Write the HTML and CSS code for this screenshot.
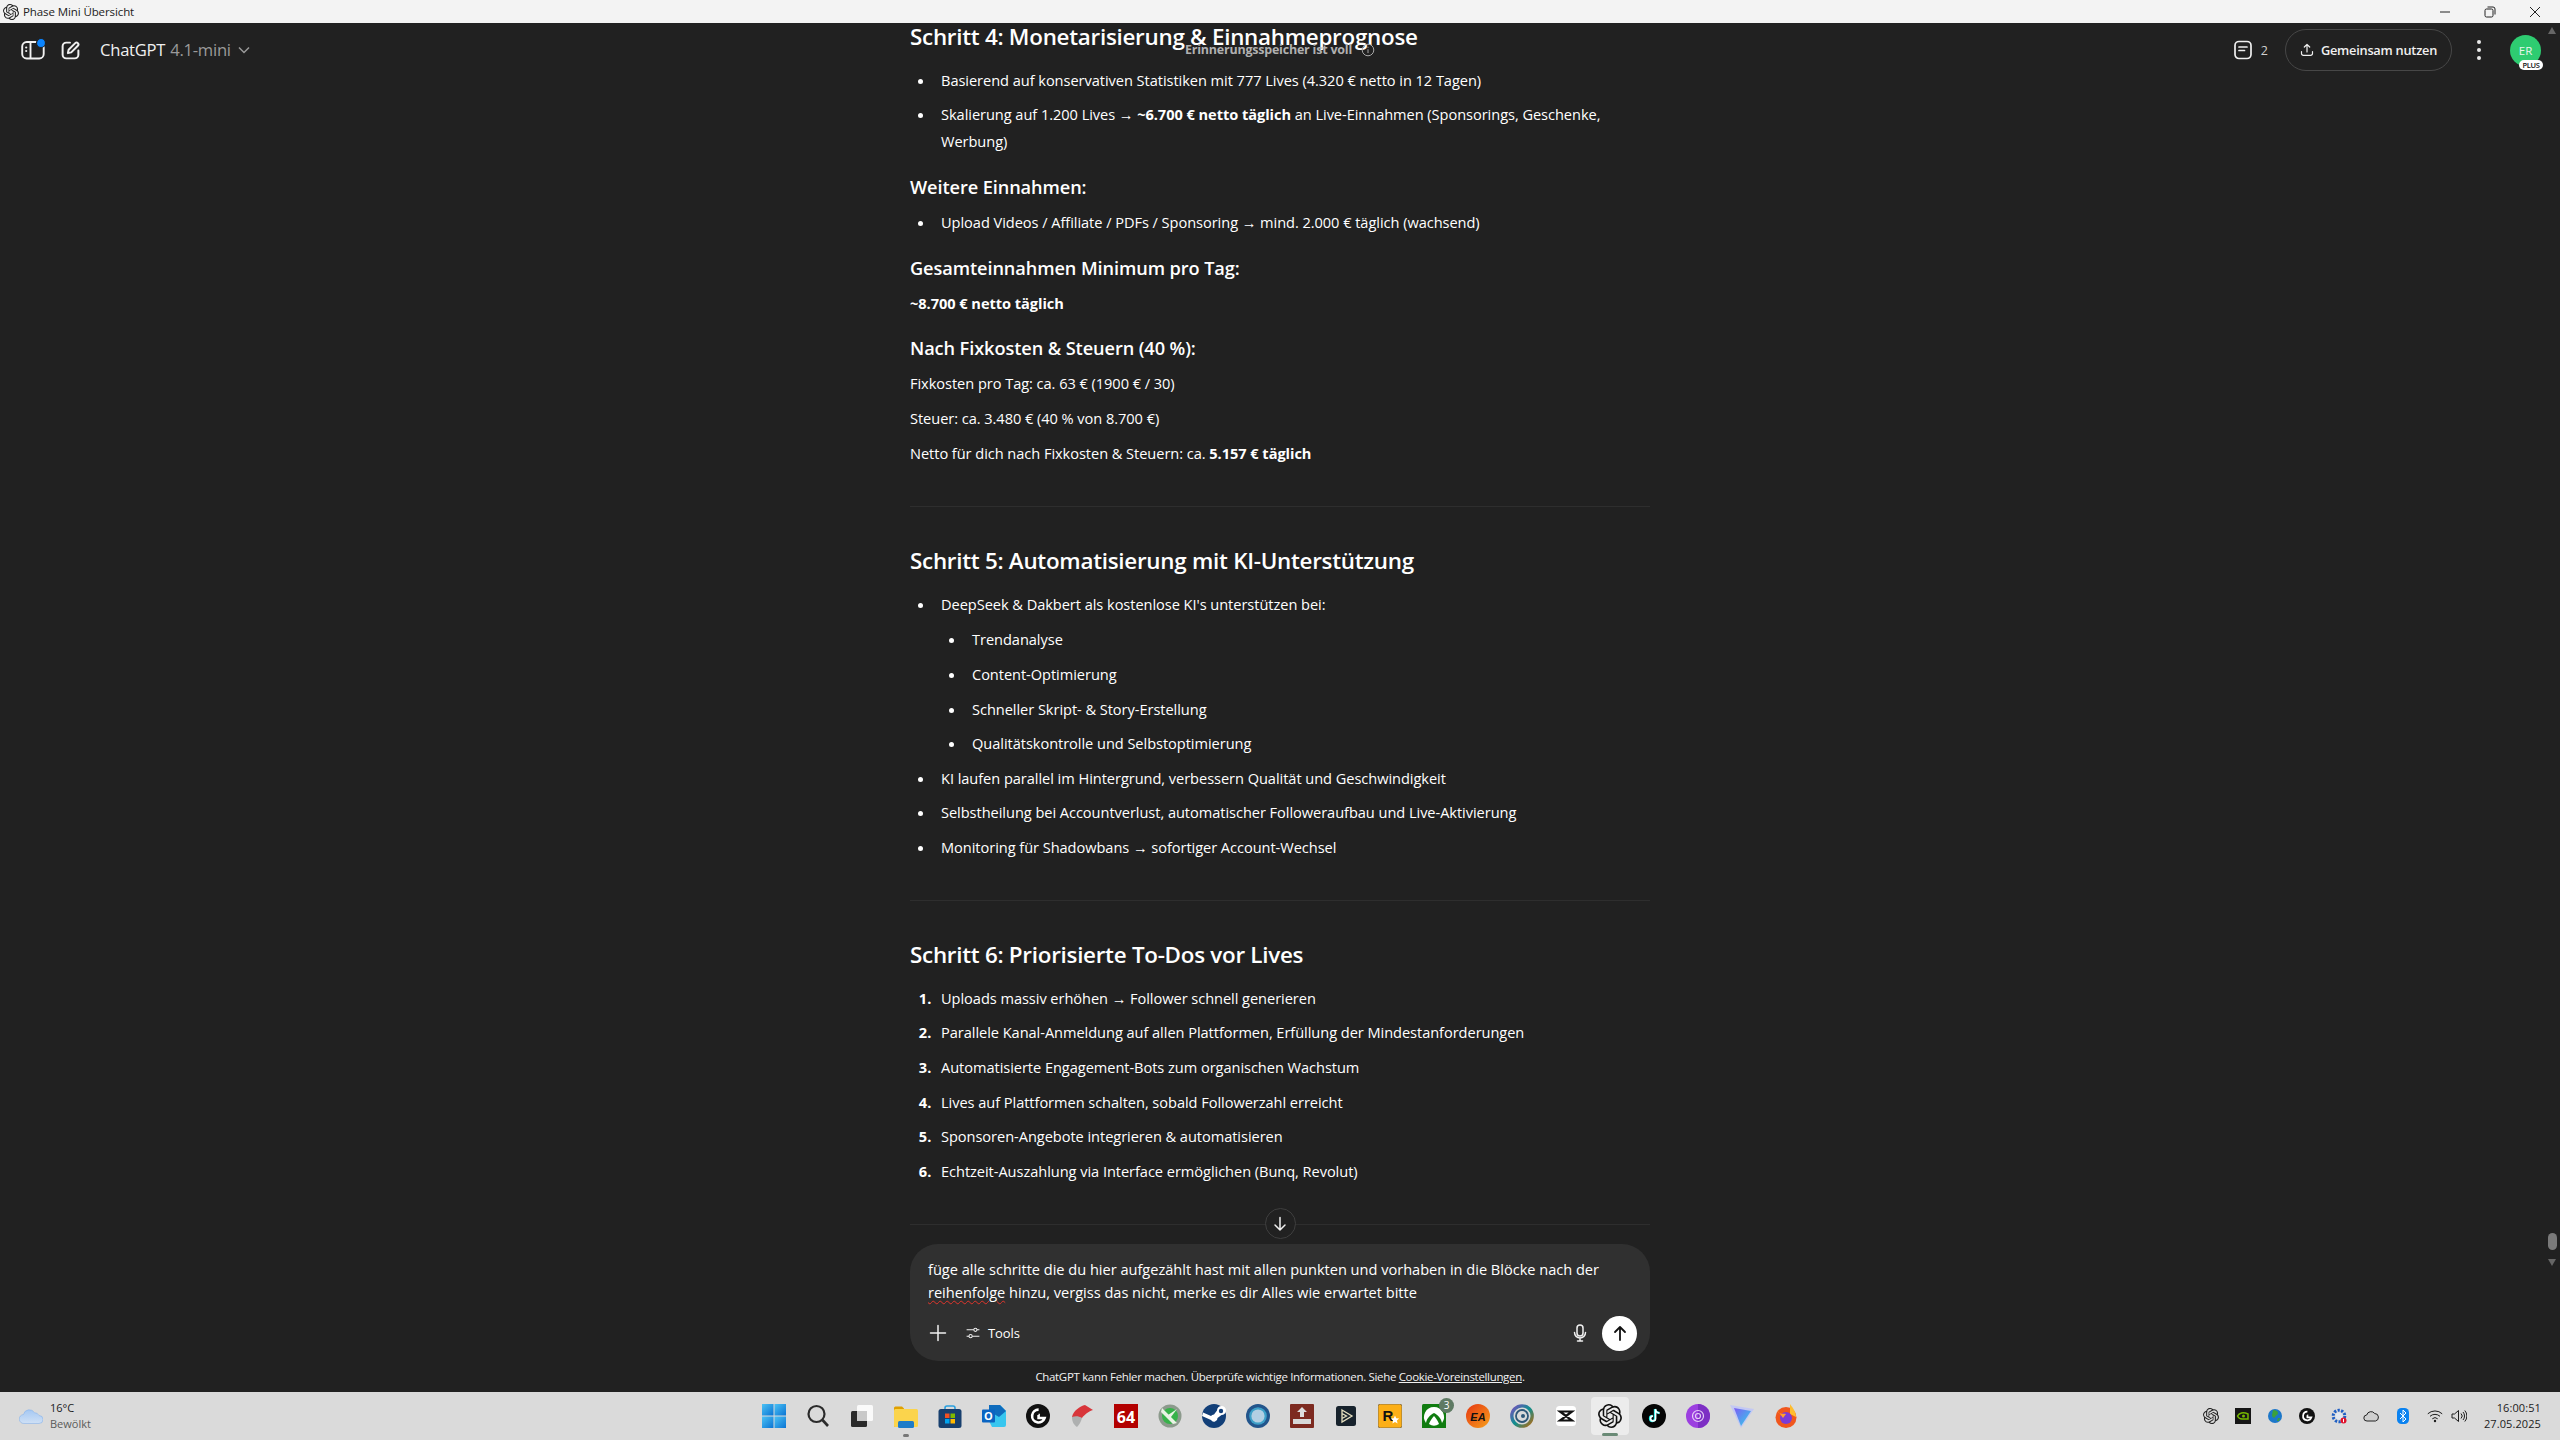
FILE: index.html
```html
<!DOCTYPE html>
<html lang="de">
<head>
<meta charset="utf-8">
<title>Phase Mini Übersicht</title>
<link rel="stylesheet" href="styles.css">
</head>
<body>
<svg class="defs" width="0" height="0" aria-hidden="true">
  <defs>
    <symbol id="openai" viewBox="0 0 24 24"><path d="M22.2819 9.8211a5.9847 5.9847 0 0 0-.5157-4.9108 6.0462 6.0462 0 0 0-6.5098-2.9A6.0651 6.0651 0 0 0 4.9807 4.1818a5.9847 5.9847 0 0 0-3.9977 2.9 6.0462 6.0462 0 0 0 .7427 7.0966 5.98 5.98 0 0 0 .511 4.9107 6.051 6.051 0 0 0 6.5146 2.9001A5.9847 5.9847 0 0 0 13.2599 24a6.0557 6.0557 0 0 0 5.7718-4.2058 5.9894 5.9894 0 0 0 3.9977-2.9001 6.0557 6.0557 0 0 0-.7475-7.0729zm-9.022 12.6081a4.4755 4.4755 0 0 1-2.8764-1.0408l.1419-.0804 4.7783-2.7582a.7948.7948 0 0 0 .3927-.6813v-6.7369l2.02 1.1686a.071.071 0 0 1 .038.052v5.5826a4.504 4.504 0 0 1-4.4945 4.4944zm-9.6607-4.1254a4.4708 4.4708 0 0 1-.5346-3.0137l.142.0852 4.783 2.7582a.7712.7712 0 0 0 .7806 0l5.8428-3.3685v2.3324a.0804.0804 0 0 1-.0332.0615L9.74 19.9502a4.4992 4.4992 0 0 1-6.1408-1.6464zM2.3408 7.8956a4.485 4.485 0 0 1 2.3655-1.9728V11.6a.7664.7664 0 0 0 .3879.6765l5.8144 3.3543-2.0201 1.1685a.0757.0757 0 0 1-.071 0l-4.8303-2.7865A4.504 4.504 0 0 1 2.3408 7.872zm16.5963 3.8558L13.1038 8.364 15.1192 7.2a.0757.0757 0 0 1 .071 0l4.8303 2.7913a4.4944 4.4944 0 0 1-.6765 8.1042v-5.6772a.79.79 0 0 0-.407-.667zm2.0107-3.0231l-.142-.0852-4.7735-2.7818a.7759.7759 0 0 0-.7854 0L9.409 9.2297V6.8974a.0662.0662 0 0 1 .0284-.0615l4.8303-2.7866a4.4992 4.4992 0 0 1 6.6802 4.66zM8.3065 12.863l-2.02-1.1638a.0804.0804 0 0 1-.038-.0567V6.0742a4.4992 4.4992 0 0 1 7.3757-3.4537l-.142.0805L8.704 5.459a.7948.7948 0 0 0-.3927.6813zm1.0976-2.3654l2.602-1.4998 2.6069 1.4998v2.9994l-2.5974 1.4997-2.6067-1.4997Z"/></symbol>
    <symbol id="logi" viewBox="0 0 24 24"><circle cx="12" cy="12" r="12" fill="#111"/><path d="M12.6 5.6a6.4 6.4 0 1 0 6 8.4h-6v-3h-.1" fill="none" stroke="#fff" stroke-width="2.6"/></symbol>
    <linearGradient id="winblue" x1="0" y1="0" x2="1" y2="1"><stop offset="0" stop-color="#4cc2f4"/><stop offset="1" stop-color="#0a74d4"/></linearGradient>
  </defs>
</svg>

<div class="window">
  <header class="titlebar">
    <div class="titlebar-left">
      <svg class="title-logo"><use href="#openai"/></svg>
      <span class="title-text">Phase Mini Übersicht</span>
    </div>
    <div class="winctl">
      <svg class="winbtn" viewBox="0 0 12 12"><path d="M1 6h10" /></svg>
      <svg class="winbtn" viewBox="0 0 12 12"><rect x="1" y="3" width="8" height="8" rx="1.5"/><path d="M3.5 1h5.5a2 2 0 0 1 2 2v5.5"/></svg>
      <svg class="winbtn" viewBox="0 0 12 12"><path d="M1 1l10 10M11 1L1 11"/></svg>
    </div>
  </header>

  <main class="app">
    <div class="scroller">
      <article class="doc">
        <h3>Schritt 4: Monetarisierung &amp; Einnahmeprognose</h3>
        <ul>
          <li>Basierend auf konservativen Statistiken mit 777 Lives (4.320 € netto in 12 Tagen)</li>
          <li>Skalierung auf 1.200 Lives → <strong>~6.700 € netto täglich</strong> an Live-Einnahmen (Sponsorings, Geschenke, Werbung)</li>
        </ul>
        <h4>Weitere Einnahmen:</h4>
        <ul>
          <li>Upload Videos / Affiliate / PDFs / Sponsoring → mind. 2.000 € täglich (wachsend)</li>
        </ul>
        <h4>Gesamteinnahmen Minimum pro Tag:</h4>
        <p><strong>~8.700 € netto täglich</strong></p>
        <h4>Nach Fixkosten &amp; Steuern (40 %):</h4>
        <p>Fixkosten pro Tag: ca. 63 € (1900 € / 30)</p>
        <p>Steuer: ca. 3.480 € (40 % von 8.700 €)</p>
        <p>Netto für dich nach Fixkosten &amp; Steuern: ca. <strong>5.157 € täglich</strong></p>
        <hr>
        <h3>Schritt 5: Automatisierung mit KI-Unterstützung</h3>
        <ul>
          <li>DeepSeek &amp; Dakbert als kostenlose KI's unterstützen bei:
            <ul>
              <li>Trendanalyse</li>
              <li>Content-Optimierung</li>
              <li>Schneller Skript- &amp; Story-Erstellung</li>
              <li>Qualitätskontrolle und Selbstoptimierung</li>
            </ul>
          </li>
          <li>KI laufen parallel im Hintergrund, verbessern Qualität und Geschwindigkeit</li>
          <li>Selbstheilung bei Accountverlust, automatischer Followeraufbau und Live-Aktivierung</li>
          <li>Monitoring für Shadowbans → sofortiger Account-Wechsel</li>
        </ul>
        <hr>
        <h3>Schritt 6: Priorisierte To-Dos vor Lives</h3>
        <ol>
          <li>Uploads massiv erhöhen → Follower schnell generieren</li>
          <li>Parallele Kanal-Anmeldung auf allen Plattformen, Erfüllung der Mindestanforderungen</li>
          <li>Automatisierte Engagement-Bots zum organischen Wachstum</li>
          <li>Lives auf Plattformen schalten, sobald Followerzahl erreicht</li>
          <li>Sponsoren-Angebote integrieren &amp; automatisieren</li>
          <li>Echtzeit-Auszahlung via Interface ermöglichen (Bunq, Revolut)</li>
        </ol>
        <hr>
      </article>
      <button class="scroll-down" aria-label="Nach unten">
        <svg viewBox="0 0 20 20" class="ico20"><path d="M10 3.5v12.5M5 11l5 5 5-5"/></svg>
      </button>
    </div>

    <div class="composer">
      <div class="composer-text">füge alle schritte die du hier aufgezählt hast mit allen punkten und vorhaben in die Blöcke nach der <span class="typo">reihenfolge</span> hinzu, vergiss das nicht, merke es dir Alles wie erwartet bitte</div>
      <div class="composer-row">
        <div class="composer-tools">
          <svg viewBox="0 0 20 20" class="ico20"><path d="M10 2.5v15M2.5 10h15"/></svg>
          <svg viewBox="0 0 20 20" class="ico16"><path d="M2 6h9M15 6h3M2 14h3M9 14h9"/><circle cx="13" cy="6" r="2"/><circle cx="7" cy="14" r="2"/></svg>
          <span class="tools-label">Tools</span>
        </div>
        <div class="composer-send">
          <svg viewBox="0 0 20 20" class="ico20"><rect x="7" y="2" width="6" height="11" rx="3"/><path d="M4.5 9.5a5.5 5.5 0 0 0 11 0M10 15v3M7.5 18h5"/></svg>
          <button class="send" aria-label="Senden"><svg viewBox="0 0 20 20" class="ico20 ico-dark"><path d="M10 17V4M5 9l5-5 5 5"/></svg></button>
        </div>
      </div>
    </div>
    <footer class="disclaimer">ChatGPT kann Fehler machen. Überprüfe wichtige Informationen. Siehe <u>Cookie-Voreinstellungen</u>.</footer>

    <div class="topbar">
      <div class="top-left">
        <svg viewBox="0 0 24 20" class="side-ico"><rect x="1.2" y="2" width="21.5" height="16.5" rx="4.5"/><path d="M9.5 2v16.5"/><circle class="fillw" cx="5.2" cy="7.5" r="1.1"/><circle class="fillw" cx="5.2" cy="11" r="1.1"/><circle class="blue-dot" cx="20" cy="3" r="4.5"/></svg>
        <svg viewBox="0 0 20 20" class="edit-ico"><path d="M9.5 2.5H6a3.5 3.5 0 0 0-3.500 3.500v8A3.500 3.500 0 0 0 6 17.500h8a3.500 3.500 0 0 0 3.500-3.500v-4"/><path d="M7.500 12.500l.7-3.200 6.300-6.300a1.700 1.700 0 0 1 2.500 2.500l-6.300 6.300z"/></svg>
        <div class="model">ChatGPT <span class="model-ver">4.1-mini</span>
          <svg viewBox="0 0 14 14" class="chev"><path d="M2 4.500l5 5 5-5"/></svg>
        </div>
      </div>
      <div class="memory">Erinnerungsspeicher ist voll
        <svg viewBox="0 0 14 14" class="info"><circle cx="7" cy="7" r="5.800"/><path d="M7 6.300v3.800M7 3.800v1"/></svg>
      </div>
      <div class="top-right">
        <div class="docs">
          <svg viewBox="0 0 20 20" class="doc-ico"><rect x="2" y="1.500" width="16" height="17" rx="4"/><path d="M6 7h8M6 10.500h5.500"/></svg>
          <span>2</span>
        </div>
        <button class="share">
          <svg viewBox="0 0 14 14" class="share-ico"><path d="M7 9V1.500M4.300 4L7 1.500 9.700 4M1.500 8.500v2A1.800 1.800 0 0 0 3.300 12.300h7.400a1.800 1.800 0 0 0 1.800-1.800v-2"/></svg>
          Gemeinsam nutzen
        </button>
        <div class="dots"><i></i><i></i><i></i></div>
        <div class="avatar">ER<span class="plus">PLUS</span></div>
      </div>
    </div>

    <div class="scrollbar">
      <span class="arrow-up"></span>
      <span class="sb-spacer"></span>
      <span class="thumb"></span>
      <span class="arrow-down"></span>
    </div>
  </main>

  <footer class="taskbar">
    <div class="weather">
      <svg viewBox="0 0 24 16" class="weather-ico"><defs><linearGradient id="cloud" x1="0" y1="0" x2="0" y2="1"><stop offset="0" stop-color="#a5c8f3"/><stop offset="1" stop-color="#cfe0f5"/></linearGradient></defs><path fill="url(#cloud)" stroke="#8ab4ea" stroke-width=".6" d="M5 15.500a4.500 4.500 0 0 1-.5-9 6 6 0 0 1 11-1.800 5 5 0 0 1 4.500 2.800 4 4 0 0 1 0 8z"/></svg>
      <div class="weather-text"><span class="temp">16°C</span><span class="cond">Bewölkt</span></div>
    </div>

    <nav class="apps">
      <div class="app-slot"><svg viewBox="0 0 24 24"><g fill="url(#winblue)"><rect width="11.500" height="11.500"/><rect x="12.500" width="11.500" height="11.500"/><rect y="12.500" width="11.500" height="11.500"/><rect x="12.500" y="12.500" width="11.500" height="11.500"/></g></svg></div>
      <div class="app-slot"><svg viewBox="0 0 24 24"><circle cx="10.500" cy="10" r="8" fill="none" stroke="#2b2b2b" stroke-width="2.200"/><path d="M16.500 16l5.500 6" stroke="#2b2b2b" stroke-width="2.600"/></svg></div>
      <div class="app-slot"><svg viewBox="0 0 24 24"><rect x="7" y="1" width="16" height="16" rx="1.500" fill="#fafafa"/><rect x="1" y="7" width="16" height="16" rx="1.500" fill="#2a2a2a"/><rect x="7" y="7" width="10" height="10" fill="#c9c9c9"/></svg></div>
      <div class="app-slot running"><svg viewBox="0 0 24 24"><path d="M0 4a1.500 1.500 0 0 1 1.500-1.500H8l2 2v18H0z" fill="#e0a000"/><rect y="5" width="24" height="18" rx="1.500" fill="#fbd44c"/><rect x="4" y="17" width="16" height="7" rx="1.500" fill="#1e7cc8"/></svg></div>
      <div class="app-slot"><svg viewBox="0 0 24 24"><path d="M7 7V4a2 2 0 0 1 2-2h6a2 2 0 0 1 2 2v3" fill="none" stroke="#2aa0e0" stroke-width="1.600"/><rect x="0.500" y="5" width="23" height="19" rx="2.500" fill="#173f6e"/><rect x="7" y="9.500" width="4.500" height="4.500" fill="#f25022"/><rect x="12.500" y="9.500" width="4.500" height="4.500" fill="#7fba00"/><rect x="7" y="15" width="4.500" height="4.500" fill="#00a4ef"/><rect x="12.500" y="15" width="4.500" height="4.500" fill="#ffb900"/></svg></div>
      <div class="app-slot"><svg viewBox="0 0 24 24"><path d="M7 1h11l6 6v14a2 2 0 0 1-2 2H10l-3-6z" fill="#37c6ef"/><path d="M7 1h11l6 6-7 6-10-6z" fill="#0f6cbd"/><rect y="5.500" width="13" height="13" rx="1" fill="#0a64c2"/><text x="6.500" y="16" class="ol">O</text></svg></div>
      <div class="app-slot"><svg><use href="#logi"/></svg></div>
      <div class="app-slot"><svg viewBox="0 0 24 24"><path d="M2 13C3 7 10 2 15 1l8 5c-4 1-9 5-11 8z" fill="#d8353a"/><path d="M2 13c3-1 7-1 10 1-1 4-3 7-5 9-3-2-5-5-5-10z" fill="#aeb0b0"/></svg></div>
      <div class="app-slot"><svg viewBox="0 0 24 24"><rect width="24" height="24" fill="#b30000"/><text x="12" y="19" class="six4">64</text></svg></div>
      <div class="app-slot"><svg viewBox="0 0 24 24"><circle cx="12" cy="12" r="11.500" fill="#8c9a8c"/><circle cx="12" cy="12" r="8" fill="#37b24a"/><path d="M4 4l15 15-4 1L3 8zM19 5l-6 8-3-2z" fill="#e9f3e4"/></svg></div>
      <div class="app-slot"><svg viewBox="0 0 24 24"><circle cx="12" cy="12" r="12" fill="#123f78"/><path d="M0 12l9 4a3.500 3.500 0 0 0 6.500-2l4-3a4.500 4.500 0 1 0-4.500-4.500l-3 4a3.500 3.500 0 0 0-3 1.500L1 8.500" fill="#fff"/><circle cx="19" cy="7" r="2.200" fill="#123f78"/></svg></div>
      <div class="app-slot"><svg viewBox="0 0 24 24"><circle cx="12" cy="12" r="12" fill="#22558c"/><circle cx="12" cy="12" r="8.800" fill="#3ea0c8"/><circle cx="12" cy="12" r="6.600" fill="#b3cfe3"/></svg></div>
      <div class="app-slot"><svg viewBox="0 0 24 24"><rect width="24" height="24" rx="1" fill="#7d2a20"/><path d="M12 3l5 5h-3v5h-4V8H7z" fill="#ddd"/><rect x="3" y="15" width="18" height="5" fill="#d8d8d8"/></svg></div>
      <div class="app-slot"><svg viewBox="0 0 24 24"><rect x="2" y="2" width="20" height="20" rx="2.500" fill="#17222c"/><path d="M8 6l10 6-10 6zM8 9.500l4.500 2.500L8 14.500" fill="none" stroke="#e6e0c0" stroke-width="1.300"/></svg></div>
      <div class="app-slot"><svg viewBox="0 0 24 24"><rect width="24" height="24" rx="2.500" fill="#fcaf17" stroke="#8a7040"/><text x="10" y="17" class="rstar">R</text><path d="M17 11.500l1.200 2.800 3 .2-2.300 2 .7 3-2.600-1.600-2.600 1.600.7-3-2.300-2 3-.2z" fill="#fff"/></svg></div>
      <div class="app-slot"><svg viewBox="0 0 24 24"><rect width="24" height="25" rx="1.500" fill="#107c10"/><path d="M12 3a10 10 0 0 0-8 16c1-5 4-8 8-10 4 2 7 5 8 10a10 10 0 0 0-8-16zM12 12c-2 2-4 5-5 8a9 9 0 0 0 10 0c-1-3-3-6-5-8z" fill="#fff"/></svg><span class="badge">3</span></div>
      <div class="app-slot"><svg viewBox="0 0 24 24"><defs><linearGradient id="ea" x1="0" y1="0" x2="1" y2="1"><stop offset="0" stop-color="#e53612"/><stop offset="1" stop-color="#f7a01c"/></linearGradient></defs><circle cx="12" cy="12" r="12" fill="url(#ea)"/><text x="12" y="16.500" class="ea">EA</text></svg></div>
      <div class="app-slot"><svg viewBox="0 0 24 24"><defs><linearGradient id="ubi" x1="0" y1="0" x2="1" y2="1"><stop offset="0" stop-color="#7a4fc0"/><stop offset=".5" stop-color="#0e8f8f"/><stop offset="1" stop-color="#b86a10"/></linearGradient></defs><circle cx="12" cy="12" r="10.200" fill="none" stroke="url(#ubi)" stroke-width="3.300"/><circle cx="12" cy="12" r="6" fill="none" stroke="#2f5878" stroke-width="1.800"/><circle cx="13" cy="12" r="2" fill="#2f5878"/></svg></div>
      <div class="app-slot"><svg viewBox="0 0 24 24"><rect x="2" y="2" width="20" height="20" rx="3.500" fill="#fff"/><path d="M6 7.500h12l-6 4.500zM6 16.500h12l-6-4.500z" fill="none" stroke="#111" stroke-width="2.200"/></svg></div>
      <div class="app-slot active"><svg class="logo-dark"><use href="#openai"/></svg></div>
      <div class="app-slot"><svg viewBox="0 0 24 24"><circle cx="12" cy="12" r="12" fill="#050505"/><path d="M13 5v9.500a2.500 2.500 0 1 1-2.500-2.500M13 5a4.500 4.500 0 0 0 4.500 4" fill="none" stroke="#25f4ee" stroke-width="2.300"/><path d="M13.600 5v9.500a2.500 2.500 0 1 1-2.500-2.500M13.600 5a4 4 0 0 0 4 4" fill="none" stroke="#fff" stroke-width="1.500"/></svg></div>
      <div class="app-slot"><svg viewBox="0 0 24 24"><circle cx="12" cy="12" r="12" fill="#9c3fe0"/><path d="M12 0a12 12 0 0 1 0 24z" fill="#7d2fc4"/><circle cx="12" cy="12" r="2.500" fill="none" stroke="#e6cff7" stroke-width="1.200"/><circle cx="12" cy="12" r="5.500" fill="none" stroke="#e6cff7" stroke-width="1.200"/></svg></div>
      <div class="app-slot"><svg viewBox="0 0 24 24"><defs><linearGradient id="pv" x1="0" y1="0" x2="1" y2="1"><stop offset="0" stop-color="#7d5cf5"/><stop offset="1" stop-color="#2fd4e8"/></linearGradient></defs><path d="M0 1l24 4-13 19z" fill="#c3c8f3"/><path d="M4 4l17 3-10 15z" fill="url(#pv)"/></svg></div>
      <div class="app-slot"><svg viewBox="0 0 24 24"><circle cx="12" cy="13.500" r="10.500" fill="#f0561d"/><path d="M16 0c2 3 6 7 6 13l-6-3z" fill="#ffbd2e"/><circle cx="12" cy="14" r="6" fill="#7a3bd6"/><path d="M3 6c1 5 6 3 9 4l-3 4z" fill="#ffa12a"/></svg></div>
    </nav>

    <div class="tray">
      <div class="tray-slot"><svg class="logo-tray"><use href="#openai"/></svg></div>
      <div class="tray-slot"><svg viewBox="0 0 16 16"><rect width="16" height="16" fill="#161616"/><path d="M2.500 8C4 5 8 3.500 13 6v5H7C5 11 3.500 10 2.500 8z" fill="none" stroke="#76b900" stroke-width="1.500"/><circle cx="8.500" cy="8" r="1.500" fill="#76b900"/></svg></div>
      <div class="tray-slot"><svg viewBox="0 0 16 16"><circle cx="8" cy="8" r="7" fill="#1c77c9"/><path d="M6 2c3 0 5 1 5 3s-2 2-3 4-3 0-3-2zM11 10l2 0-1 3-2 0z" fill="#3ca03c"/></svg></div>
      <div class="tray-slot"><svg><use href="#logi"/></svg></div>
      <div class="tray-slot"><svg viewBox="0 0 16 16"><circle cx="8" cy="8" r="5.800" fill="none" stroke="#1f5fc4" stroke-width="3" stroke-dasharray="2.200 1.400"/><circle cx="8" cy="8" r="3.500" fill="#e2e8f0"/><circle cx="12.500" cy="12.500" r="3" fill="#e0112b"/><rect x="12" y="10.800" width="1" height="3.400" fill="#fff"/></svg></div>
      <div class="tray-slot"><svg viewBox="0 0 16 12"><path d="M4 11a3 3 0 0 1-.3-6 4.500 4.500 0 0 1 8-1.500A3.800 3.800 0 0 1 12.500 11z" fill="#cfcfcf" stroke="#222" stroke-width="1"/></svg></div>
      <div class="tray-slot"><svg viewBox="0 0 12 16"><rect width="12" height="16" rx="4.500" fill="#0a82f0"/><path d="M3 5l6 6-3 3V2l3 3-6 6" fill="none" stroke="#fff" stroke-width="1"/></svg></div>
      <div class="tray-slot"><svg viewBox="0 0 16 14" class="line-ico"><path d="M.8 4.800a10.500 10.500 0 0 1 14.400 0M3 7.300a7.400 7.400 0 0 1 10 0M5.300 9.800a4 4 0 0 1 5.400 0"/><circle class="filld" cx="8" cy="12" r="1.200"/></svg></div>
      <div class="tray-slot tray-close"><svg viewBox="0 0 16 14" class="line-ico"><path d="M1 5h2.500L7.500 1.500v11L3.500 9H1zM10 4.500a3.500 3.500 0 0 1 0 5M12 3a6 6 0 0 1 0 8M13.800 1.500a8.300 8.300 0 0 1 0 11"/></svg></div>
    </div>
    <div class="clock"><span>16:00:51</span><span>27.05.2025</span></div>
  </footer>
</div>
</body>
</html>
```
FILE: styles.css
```css
* { box-sizing: border-box; }
html, body { margin: 0; padding: 0; height: 100%; }
body { font-family: "Open Sans", "Noto Sans", sans-serif; overflow: hidden; }
.defs { position: absolute; }
.window { height: 1440px; display: flex; flex-direction: column; }

.titlebar { height: 23px; flex: none; background: #f3f3f3; display: flex; justify-content: space-between; align-items: center; padding: 0 0 0 3px; }
.titlebar-left { display: flex; align-items: center; gap: 4px; }
.title-logo { width: 16px; height: 16px; fill: #222; }
.title-text { font-size: 11.5px; color: #222; letter-spacing: -.1px; }
.winctl { display: flex; gap: 33px; padding-right: 19px; align-items: center; }
.winbtn { width: 12px; height: 12px; fill: none; stroke: #222; stroke-width: 1; }

.app { position: relative; flex: 1; min-height: 0; background: #212121; color: #fff; display: flex; flex-direction: column; }
.scroller { position: relative; height: 1221px; flex: none; overflow: hidden; }
.doc { width: 740px; margin: 0 auto; font-size: 14.6px; line-height: 26.6px; letter-spacing: -.05px; }
.doc h3 { margin: 0 0 15.7px; font-size: 22.4px; line-height: 28px; font-weight: 600; letter-spacing: -.27px; }
.doc h4 { margin: 20.7px 0 9.7px; font-size: 18.2px; line-height: 24px; font-weight: 600; letter-spacing: -.1px; }
.doc p { margin: 0 0 8.4px; }
.doc p:last-of-type { margin-bottom: 0; }
.doc p + h4 { margin-top: 20px; }
.doc strong { font-weight: 700; }
.doc ul, .doc ol { margin: 0; padding-left: 25px; }
.doc ul { list-style-type: disc; }
.doc ul ul { list-style-type: disc; }
.doc li { margin: 0 0 8px; padding-left: 6px; }
.doc li:last-child { margin-bottom: 0; }
.doc li > ul { margin-top: 9px; }
.doc ol li::marker { font-weight: 700; }
.doc hr { border: 0; height: 1px; background: #2e2e2e; margin: 39.5px 0 40px; }

.scroll-down { position: absolute; left: 50%; bottom: 5px; width: 31px; height: 31px; margin-left: -15.5px; border-radius: 50%; border: 1px solid #3f3f3f; background: #212121; padding: 0; display: flex; align-items: center; justify-content: center; }
.ico20 { width: 20px; height: 20px; fill: none; stroke: #f0f0f0; stroke-width: 1.5; stroke-linecap: round; stroke-linejoin: round; }
.ico16 { width: 16px; height: 16px; fill: none; stroke: #f0f0f0; stroke-width: 1.3; }
.ico-dark { stroke: #111; stroke-width: 1.8; }

.composer { width: 740px; height: 117px; margin: 0 auto; flex: none; background: #303030; border-radius: 28px; padding: 14px 20px 10.5px 18px; font-size: 14.6px; line-height: 23px; letter-spacing: -.02px; }
.composer-text { height: 46px; margin-bottom: 11.5px; }
.typo { text-decoration: underline wavy #e0352b 1px; text-underline-offset: 2px; }
.composer-row { display: flex; justify-content: space-between; align-items: center; height: 35px; }
.composer-tools { display: flex; align-items: center; }
.composer-tools .ico16 { margin: 0 7px 0 17px; }
.tools-label { font-size: 13px; letter-spacing: -.1px; }
.composer-send { display: flex; align-items: center; gap: 12.5px; margin-right: -7px; }
.send { width: 35px; height: 35px; border: 0; border-radius: 50%; background: #fff; padding: 0; display: flex; align-items: center; justify-content: center; }
.disclaimer { flex: 1; text-align: center; font-size: 11.5px; line-height: 31px; letter-spacing: -.33px; color: #f2f2f2; }

.topbar { position: absolute; top: 6px; left: 0; right: 0; height: 42px; display: flex; align-items: center; justify-content: space-between; padding: 0 19px 0 21px; }
.top-left { display: flex; align-items: center; }
.side-ico { width: 24px; height: 20px; fill: none; stroke: #f0f0f0; stroke-width: 1.9; overflow: visible; }
.fillw { fill: #f0f0f0; stroke: none; }
.blue-dot { fill: #0a84ff; stroke: #212121; stroke-width: 1.2; }
.edit-ico { width: 21px; height: 21px; margin-left: 15px; fill: none; stroke: #f0f0f0; stroke-width: 1.9; stroke-linecap: round; stroke-linejoin: round; }
.model { margin-left: 19px; font-size: 16.6px; line-height: 22px; letter-spacing: -.25px; color: #f0f0f0; display: flex; align-items: center; gap: .3em; margin-top: -1px; }
.model-ver { color: #9a9a9a; }
.chev { width: 14px; height: 14px; fill: none; stroke: #9a9a9a; stroke-width: 1.5; margin-left: 1px; }
.memory { position: absolute; left: 1185px; top: 12px; font-size: 12.5px; font-weight: 700; letter-spacing: -.22px; color: #b0b0b0; display: flex; align-items: center; gap: 9px; line-height: 18px; }
.info { width: 14px; height: 14px; fill: none; stroke: #a8a8a8; stroke-width: 1; }
.top-right { display: flex; align-items: center; }
.docs { display: flex; align-items: center; gap: 8px; font-size: 12.5px; color: #d0d0d0; }
.doc-ico { width: 20px; height: 20px; fill: none; stroke: #f0f0f0; stroke-width: 1.7; stroke-linecap: round; }
.share { margin-left: 17px; width: 167px; height: 42px; border: 1px solid #474747; border-radius: 21px; background: transparent; color: #f0f0f0; font: 600 12.8px "Open Sans", sans-serif; letter-spacing: -.25px; display: flex; align-items: center; justify-content: center; gap: 7px; padding: 0; }
.share-ico { width: 14px; height: 14px; fill: none; stroke: #f0f0f0; stroke-width: 1.2; stroke-linecap: round; stroke-linejoin: round; }
.dots { margin-left: 23px; width: 8px; display: flex; flex-direction: column; gap: 4px; align-items: center; }
.dots i { width: 4px; height: 4px; border-radius: 50%; background: #e8e8e8; }
.avatar { position: relative; margin-left: 27px; width: 31px; height: 31px; border-radius: 50%; background: #2ecc71; color: #e8f6ee; font-size: 11.5px; display: flex; align-items: center; justify-content: center; }
.plus { position: absolute; left: 9px; top: 25px; width: 24px; height: 10px; border-radius: 5px; background: #fff; color: #111; font-size: 7.5px; font-weight: 600; line-height: 10px; text-align: center; letter-spacing: -.3px; }

.scrollbar { position: absolute; top: 4px; right: 3px; bottom: 126px; width: 10px; display: flex; flex-direction: column; align-items: center; }
.arrow-up { width: 0; height: 0; border-left: 4.5px solid transparent; border-right: 4.5px solid transparent; border-bottom: 7px solid #666; }
.sb-spacer { flex: 1; }
.thumb { width: 9px; height: 17px; border-radius: 4.5px; background: #7a7a7a; margin-bottom: 9px; }
.arrow-down { width: 0; height: 0; border-left: 4.5px solid transparent; border-right: 4.5px solid transparent; border-top: 7px solid #666; }

.taskbar { position: relative; height: 48px; flex: none; background: #dadada; display: flex; align-items: center; justify-content: center; font-family: "Open Sans", sans-serif; color: #1c1c1c; }
.weather { position: absolute; left: 19px; top: 0; height: 48px; display: flex; align-items: center; gap: 7px; }
.weather-ico { width: 24px; height: 16px; }
.weather-text { display: flex; flex-direction: column; font-size: 11px; line-height: 16px; }
.cond { color: #5a5a5a; }
.apps { display: flex; }
.app-slot { position: relative; width: 44px; height: 48px; display: flex; align-items: center; justify-content: center; }
.app-slot svg { width: 24px; height: 24px; }
.running::after { content: ""; position: absolute; bottom: 3px; left: 19px; width: 6px; height: 3px; border-radius: 2px; background: #777; }
.active::before { content: ""; position: absolute; left: 3px; right: 3px; top: 5px; bottom: 5px; background: #ececec; border-radius: 4px; }
.active::after { content: ""; position: absolute; bottom: 4px; left: 14px; width: 16px; height: 3px; border-radius: 2px; background: #6a8a76; }
.active svg { position: relative; }
.logo-dark { fill: #111; }
.badge { position: absolute; top: 6px; right: 2px; width: 15px; height: 15px; border-radius: 50%; background: #5f7a64; color: #fff; font-size: 10px; line-height: 15px; text-align: center; }
.ol { font: 700 11px "Open Sans", sans-serif; fill: #fff; text-anchor: middle; }
.six4 { font: 700 16px "Open Sans", sans-serif; fill: #fff; text-anchor: middle; }
.rstar { font: 700 15px "Liberation Sans", sans-serif; fill: #111; text-anchor: middle; }
.ea { font: italic 700 11px "Liberation Sans", sans-serif; fill: #111; text-anchor: middle; }
.tray { position: absolute; left: 2195px; top: 0; height: 48px; display: flex; }
.tray-slot { width: 32px; height: 48px; display: flex; align-items: center; justify-content: center; }
.tray-slot svg { width: 16px; height: 16px; }
.tray-close { margin-left: -8px; }
.logo-tray { fill: #222; }
.line-ico { fill: none; stroke: #1c1c1c; stroke-width: 1; }
.filld { fill: #1c1c1c; stroke: none; }
.clock { position: absolute; right: 19px; top: 8px; display: flex; flex-direction: column; align-items: flex-end; font-size: 11px; line-height: 16px; letter-spacing: .1px; }
```
